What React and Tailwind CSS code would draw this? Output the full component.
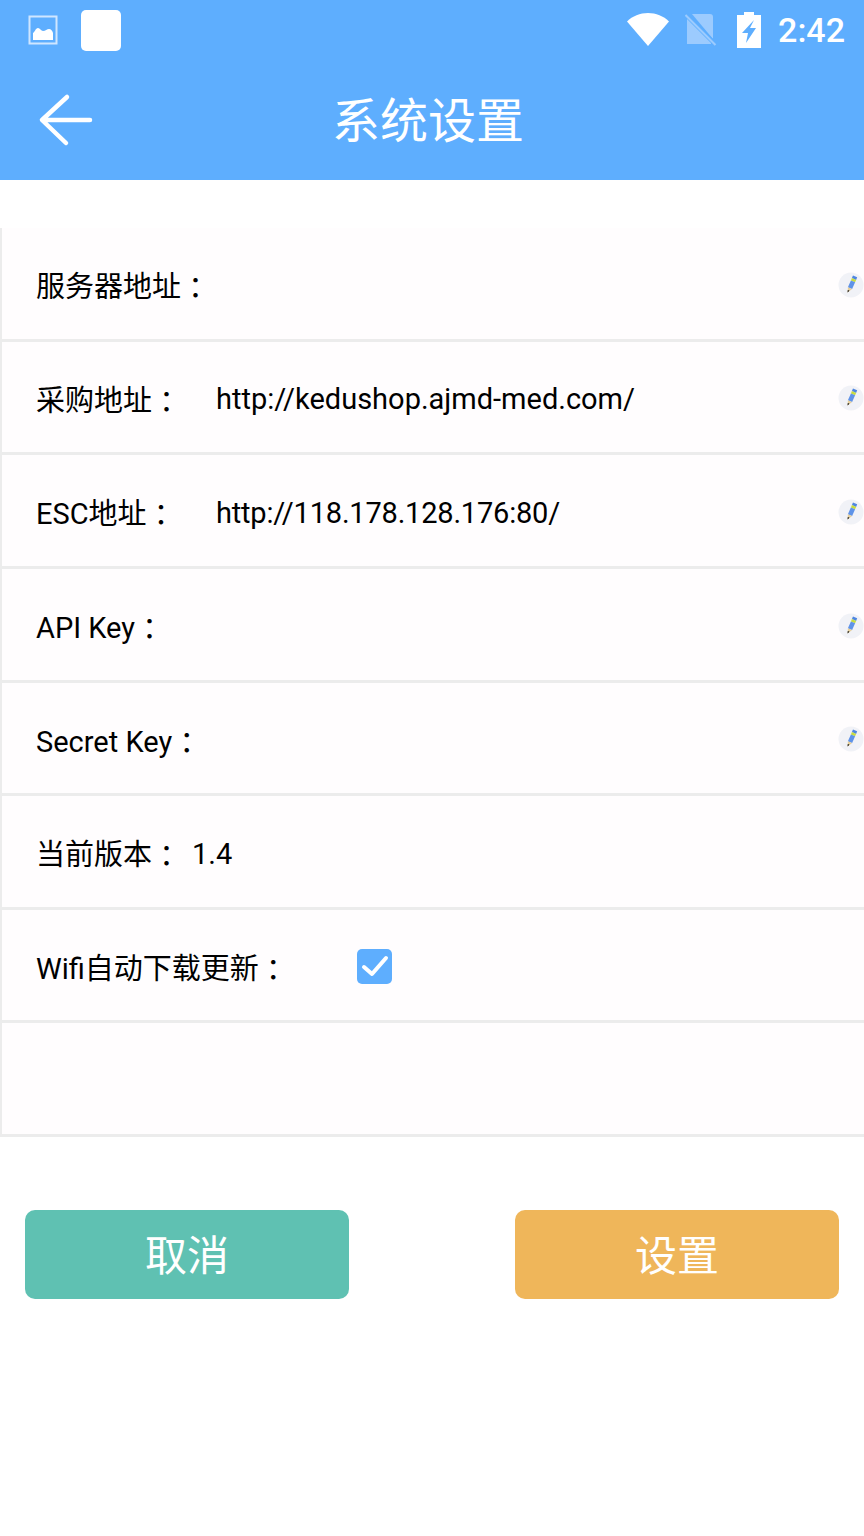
const font = { fontFamily: '"Roboto", "Noto Sans CJK SC", sans-serif' };
const colonFont = { fontFamily: '"Noto Sans CJK JP", sans-serif' };

function PencilIcon() {
  return (
    <svg width="26" height="26" viewBox="0 0 26 26" className="mt-[3px] shrink-0">
      <circle cx="13" cy="13" r="12.500" fill="#f1f2f7" />
      <path d="M15 3.500l4.200 1.800-1.100 2.600-4.200-1.800z" fill="#4f86e0" />
      <path d="M13.900 6.100l4.200 1.800-1 2.300-4.200-1.800z" fill="#c9dc3f" />
      <path d="M12.900 8.400l4.200 1.800-3 6.800-4.200-1.800z" fill="#5f93e8" />
      <path d="M9.900 15.200l4.200 1.800-4.500 3.500z" fill="#e5cf9e" />
      <path d="M9.800 18l1.700.8-2 1.700z" fill="#111" />
    </svg>
  );
}

function Colon() {
  return <span className="inline-block translate-y-[2px]" style={colonFont}>：</span>;
}

function Row({ label, value, editable, labelWidth = 'w-[180px]', valueClass = '', children }) {
  return (
    <div className="flex h-[113.65px] items-center border-b-[3px] border-l-2 border-[#ececec] bg-[#fffdfe] pl-[34px] text-[29px] text-black">
      {label && (
        <div className={`${labelWidth} mt-[6px] shrink-0 whitespace-nowrap`}>
          {label}
          <Colon />
        </div>
      )}
      <div className={`mt-[6px] flex-1 whitespace-nowrap ${valueClass}`}>{value}</div>
      {children}
      {editable && <PencilIcon />}
    </div>
  );
}

export default function App() {
  return (
    <div className="h-[1536px] w-[864px] overflow-hidden bg-white" style={font}>
      <div className="h-[180px] bg-[#5eaefe] text-white">
        <div className="flex h-[60px] items-center pl-[28px] pr-[19px]">
          <svg width="30" height="30" viewBox="0 0 30 30" className="mr-[23px]">
            <rect x="1.500" y="1.500" width="27" height="27" fill="none" stroke="#cfe6ff" strokeWidth="2" />
            <path d="M5 25v-7c2-1 2.500-5 5-5 2 0 3 3 5 3 2.500 0 4-2 6-2 2 0 3.500 2 4 4v7z" fill="#fff" />
          </svg>
          <div className="h-[41px] w-[40px] rounded-[5px] bg-white" />
          <div className="flex-1" />
          <svg width="42" height="34" viewBox="0 0 42 34" className="mr-[16px] mt-[-2px]">
            <path d="M0 9.500C5.500 4 13 1 21 1s15.500 3 21 8.500L21 34z" fill="#fff" />
          </svg>
          <svg width="32" height="34" viewBox="0 0 32 34" className="mr-[20px]">
            <path d="M7 1h18a3 3 0 0 1 3 3v22z" fill="#9ccbfe" />
            <path d="M2 6v25h24v-1z" fill="#9ccbfe" />
            <path d="M0.500 1l31 31" stroke="#5eaefe" strokeWidth="4" />
            <path d="M0.500 2l30 30" stroke="#9ccbfe" strokeWidth="2" />
          </svg>
          <svg width="24" height="36" viewBox="0 0 24 36" className="mr-[17px]">
            <path d="M7 0h10v3h7v33H0V3h7z" fill="#fff" />
            <path d="M17 8L5 21h6l-2 10 10-15h-6l4-8z" fill="#5eaefe" />
          </svg>
          <span className="text-[34px] font-medium leading-none">2:42</span>
        </div>
        <div className="relative flex h-[120px] items-center justify-center">
          <svg width="56" height="56" viewBox="0 0 56 56" className="absolute left-[38px] top-[32px]">
            <path d="M52 28H5M29 5L4 28l24 23" fill="none" stroke="#fff" strokeWidth="4.500" strokeLinecap="round" strokeLinejoin="round" />
          </svg>
          <span className="ml-[-8px] mt-[3px] text-[48px] leading-none">系统设置</span>
        </div>
      </div>

      <div className="mt-[48px]">
        <Row label="服务器地址" editable />
        <Row label="采购地址" value="http://kedushop.ajmd-med.com/" editable />
        <Row label="ESC地址" value="http://118.178.128.176:80/" valueClass="tracking-[-0.2px]" editable />
        <Row label="API Key" editable />
        <Row label="Secret Key" editable />
        <Row label="当前版本" labelWidth="w-[156px]" value="1.4" />
        <Row label="Wifi自动下载更新" labelWidth="w-[321px]">
          <div className="absolute left-[357px] mt-[2px] flex h-[35px] w-[35px] items-center justify-center rounded-[5px] bg-[#5eaefe]">
            <svg width="28" height="24" viewBox="0 0 28 24">
              <path d="M3 13l8 7L25 4" fill="none" stroke="#fff" strokeWidth="4" strokeLinecap="round" strokeLinejoin="round" />
            </svg>
          </div>
        </Row>
        <Row />
      </div>

      <div className="mt-[73px] flex justify-between px-[25px]">
        <button className="h-[89px] w-[324px] rounded-[10px] bg-[#5fc1b2] pt-[4px] text-[42px] text-white">取消</button>
        <button className="h-[89px] w-[324px] rounded-[10px] bg-[#efb65a] pt-[4px] text-[42px] text-white">设置</button>
      </div>
    </div>
  );
}
